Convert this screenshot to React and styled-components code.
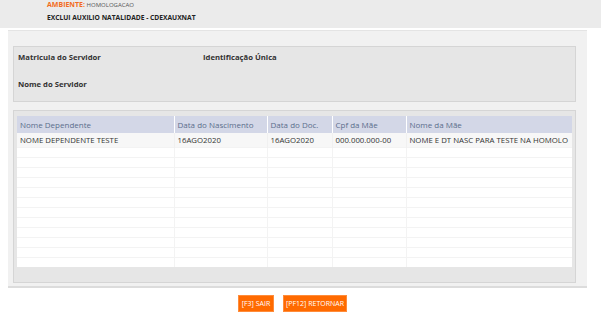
import React from 'react';
import styled, { createGlobalStyle } from 'styled-components';

const GlobalStyle = createGlobalStyle`
  body {
    margin: 0;
    background: #ffffff;
    font-family: 'Open Sans', 'Liberation Sans', sans-serif;
    color: #333333;
  }
`;

const columns = [
  { label: 'Nome Dependente', width: 157 },
  { label: 'Data do Nascimento', width: 93 },
  { label: 'Data do Doc.', width: 65 },
  { label: 'Cpf da Mãe', width: 74 },
  { label: 'Nome da Mãe', width: 166 },
];

const rows = [
  ['NOME DEPENDENTE TESTE', '16AGO2020', '16AGO2020', '000.000.000-00', 'NOME E DT NASC PARA TESTE NA HOMOLO'],
];

const emptyRows = 12;

function App() {
  return (
    <>
      <GlobalStyle />
      <Header>
        <Env>
          <EnvLabel>AMBIENTE:</EnvLabel> HOMOLOGACAO
        </Env>
        <PageTitle>EXCLUI AUXILIO NATALIDADE - CDEXAUXNAT</PageTitle>
      </Header>

      <Panel>
        <InfoBox>
          <InfoRow>
            <InfoLabel $width={185}>Matricula do Servidor</InfoLabel>
            <InfoLabel>Identificação Única</InfoLabel>
          </InfoRow>
          <InfoRow>
            <InfoLabel>Nome do Servidor</InfoLabel>
          </InfoRow>
        </InfoBox>

        <TableBox>
          <Table>
            <colgroup>
              {columns.map((c) => (
                <col key={c.label} style={{ width: c.width }} />
              ))}
            </colgroup>
            <thead>
              <tr>
                {columns.map((c) => (
                  <Th key={c.label}>{c.label}</Th>
                ))}
              </tr>
            </thead>
            <tbody>
              {rows.map((r, i) => (
                <DataRow key={i}>
                  {r.map((v, j) => (
                    <Td key={j}>{v}</Td>
                  ))}
                </DataRow>
              ))}
              {Array.from({ length: emptyRows }).map((_, i) => (
                <EmptyRow key={i}>
                  {columns.map((c) => (
                    <EmptyCell key={c.label} />
                  ))}
                </EmptyRow>
              ))}
            </tbody>
          </Table>
        </TableBox>
      </Panel>

      <Actions>
        <ActionButton>[F3] SAIR</ActionButton>
        <ActionButton>[PF12] RETORNAR</ActionButton>
      </Actions>
    </>
  );
}

const Header = styled.div`
  height: 28px;
  background: #ebebeb;
  padding-left: 47px;
  box-sizing: border-box;
  display: flex;
  flex-direction: column;
  gap: 3px;
`;

const Env = styled.div`
  font-size: 6px;
  color: #555;
  line-height: 10px;
`;

const EnvLabel = styled.span`
  color: #f26b21;
  font-weight: 700;
  font-size: 7px;
`;

const PageTitle = styled.div`
  font-size: 6.7px;
  font-weight: 700;
  color: #222;
  line-height: 10px;
`;

const Panel = styled.div`
  margin: 2px 14px 0 8px;
  background: #f1f1f1;
  border-top: 1px solid #e4e4e4;
  border-bottom: 2px solid #dcdcdc;
  padding: 15px 11px 3px 5px;
  display: flex;
  flex-direction: column;
  gap: 8px;
`;

const InfoBox = styled.div`
  height: 56px;
  box-sizing: border-box;
  background: #e6e6e6;
  border: 1px solid #d5d5d5;
  padding: 5px 4px;
  display: flex;
  flex-direction: column;
  gap: 17px;
`;

const InfoRow = styled.div`
  display: flex;
  line-height: 10px;
`;

const InfoLabel = styled.div`
  font-size: 7.7px;
  font-weight: 700;
  color: #333;
  width: ${(p) => (p.$width ? `${p.$width}px` : 'auto')};
`;

const TableBox = styled.div`
  background: #e6e6e6;
  border: 1px solid #d5d5d5;
  padding: 5px 3px 15px 3px;
`;

const Table = styled.table`
  width: 100%;
  border-collapse: collapse;
  background: #ffffff;
  table-layout: fixed;
`;

const Th = styled.th`
  background: #d3d7e7;
  color: #5b6e8c;
  font-size: 8px;
  font-weight: 400;
  text-align: left;
  height: 17px;
  padding: 0 3px;
  border-left: 1px solid #ffffff;
  &:first-child {
    border-left: none;
  }
`;

const DataRow = styled.tr`
  background: #f7f7f7;
`;

const Td = styled.td`
  font-size: 7.8px;
  color: #333;
  height: 14px;
  padding: 0 3px;
  white-space: nowrap;
  overflow: hidden;
  border-left: 1px solid #f0f0f0;
  &:first-child {
    border-left: none;
  }
`;

const EmptyRow = styled.tr`
  border-top: 1px solid #f3f3f3;
`;

const EmptyCell = styled.td`
  height: 9px;
  padding: 0;
  border-left: 1px solid #f3f3f3;
  &:first-child {
    border-left: none;
  }
`;

const Actions = styled.div`
  display: flex;
  justify-content: center;
  gap: 9px;
  padding-top: 7px;
  padding-right: 16px;
`;

const ActionButton = styled.button`
  background: #ff6a00;
  color: #ffffff;
  border: 1px solid #ff8c3a;
  font-family: 'Open Sans', 'Liberation Sans', sans-serif;
  font-size: 7px;
  height: 17px;
  min-width: 36px;
  padding: 0 2px;
  cursor: pointer;
`;

export default App;
